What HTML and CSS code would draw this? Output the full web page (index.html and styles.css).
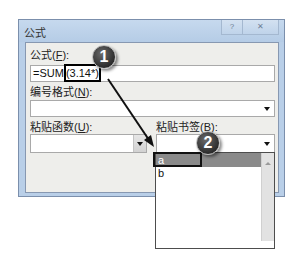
FILE: index.html
```html
<!DOCTYPE html>
<html lang="zh">
<head>
    <meta charset="UTF-8">
    <meta name="viewport" content="width=device-width, initial-scale=1.0">
    <title>公式</title>
    <link rel="stylesheet" href="styles.css">
</head>
<body>
    <div class="stage">
        <div class="dialog">
            <div class="titlebar">
                <span class="title">公式</span>
                <div class="title-buttons">
                    <span class="tbtn help">?</span>
                    <span class="tbtn close">&#x2715;</span>
                </div>
            </div>
            <div class="content">
                <div class="label first">公式(<u>F</u>):</div>
                <div class="field">=SUM<span class="mark">(3.14*)</span></div>

                <div class="label">编号格式(<u>N</u>):</div>
                <div class="field combo"><span class="arrow"></span></div>

                <div class="pair">
                    <div>
                        <div class="label">粘贴函数(<u>U</u>):</div>
                        <div class="field combo boxed"><span class="drop-btn"><span class="arrow"></span></span></div>
                    </div>
                    <div>
                        <div class="label">粘贴书签(<u>B</u>):</div>
                        <div class="field combo"><span class="arrow"></span></div>
                    </div>
                </div>
            </div>
        </div>

        <!-- opened bookmark list -->
        <div class="droplist">
            <div class="items">
                <div class="item selected">a</div>
                <div class="item">b</div>
            </div>
            <div class="scrollbar"><span class="up"></span></div>
        </div>

        <!-- callouts -->
        <div class="callbox"></div>
        <svg class="pointer" width="300" height="264" viewBox="0 0 300 264">
            <line x1="108" y1="79" x2="149" y2="140" stroke="#111" stroke-width="2"/>
            <polygon points="154,147 144,140 151,135" fill="#111"/>
        </svg>
        <div class="badge one">1</div>
        <div class="badge two">2</div>
    </div>
</body>
</html>
```

FILE: styles.css
```css
body {
    margin: 0;
    background-color: #fff;
    font-family: "Liberation Sans", "Noto Sans CJK SC", sans-serif;
    color: #222;
}

.stage {
    position: relative;
    width: 300px;
    height: 264px;
    overflow: hidden;
    padding: 19px 0 0 18px;
    box-sizing: border-box;
}

.dialog {
    width: 267px;
    border: 1px solid #7b8fac;
    background-color: #b9cfe8;
    padding: 0 5px 3px 6px;
    box-sizing: border-box;
}

.titlebar {
    height: 22px;
    display: flex;
    justify-content: space-between;
    align-items: flex-start;
    background: linear-gradient(#c6d9ee, #b5cce6);
    margin: 0 -5px 0 -6px;
    padding: 0 5px 0 5px;
}

.title {
    font-size: 11px;
    line-height: 12px;
    margin-top: 7px;
    color: #333;
}

.title-buttons {
    display: flex;
}

.tbtn {
    height: 14px;
    font-size: 8px;
    line-height: 14px;
    text-align: center;
    color: #6d7f96;
    background: linear-gradient(#d3e1f1, #bfd3ea);
    border: 1px solid #a4b8d0;
    border-top: none;
}

.help {
    width: 20px;
    border-right: none;
}

.close {
    width: 35px;
}

.content {
    height: 151px;
    border: 1px solid #8798b1;
    background-color: #eeeeeb;
    padding: 0 3px 0 4px;
    box-sizing: border-box;
}

.label {
    font-size: 11px;
    line-height: 12px;
    height: 12px;
    margin-top: 4px;
    color: #222;
}

.label.first {
    margin-top: 6px;
}

.field {
    position: relative;
    height: 17px;
    margin-top: 2px;
    background-color: #fff;
    border: 1px solid #a9a9a9;
    box-sizing: border-box;
    font-size: 11px;
    line-height: 15px;
    padding-left: 2px;
    color: #111;
}

.label.first + .field {
    margin-top: 4px;
}

.mark {
    border: 2px solid #000;
    padding: 1px 0 1px 0;
    background-color: #fff;
}

.combo .arrow {
    position: absolute;
    right: 4px;
    top: 6px;
    width: 0;
    height: 0;
    border-left: 3px solid transparent;
    border-right: 3px solid transparent;
    border-top: 4px solid #111;
}

.pair {
    display: grid;
    grid-template-columns: 117px 1fr;
    column-gap: 9px;
}

.pair .field {
    height: 19px;
    margin-top: 1px;
}

.pair .combo .arrow {
    top: 7px;
}

.drop-btn {
    position: absolute;
    right: 0;
    top: 0;
    bottom: 0;
    width: 12px;
    background: linear-gradient(#e6e6e6, #d2d2d2);
    border-left: 1px solid #c4c4c4;
}

.drop-btn .arrow {
    right: 3px;
}

/* opened list */
.droplist {
    position: absolute;
    left: 155px;
    top: 152px;
    width: 120px;
    height: 97px;
    border: 1px solid #4d4d4d;
    background-color: #fff;
    box-sizing: border-box;
    display: flex;
}

.items {
    flex: 1;
}

.item {
    height: 12px;
    font-size: 11px;
    line-height: 12px;
    padding-left: 2px;
    color: #111;
}

.item.selected {
    height: 14px;
    line-height: 14px;
    background-color: #8a8a8a;
    color: #fff;
}

.scrollbar {
    width: 12px;
    height: 88px;
    background-color: #e2e2e2;
    border-left: 1px solid #d0d0d0;
    position: relative;
}

.scrollbar .up {
    position: absolute;
    left: 3px;
    top: 9px;
    border-left: 3px solid transparent;
    border-right: 3px solid transparent;
    border-bottom: 3px solid #9a9a9a;
}

/* callouts */
.callbox {
    position: absolute;
    left: 153px;
    top: 152px;
    width: 49px;
    height: 15px;
    border: 2px solid #111;
    box-sizing: border-box;
}

.pointer {
    position: absolute;
    left: 0;
    top: 0;
}

.badge {
    position: absolute;
    width: 22px;
    height: 22px;
    border-radius: 50%;
    background: radial-gradient(circle at 40% 35%, #6a6a6a, #2c2c2c 70%);
    border: 1px solid #bdbdbd;
    box-shadow: 2px 2px 3px rgba(0, 0, 0, 0.45);
    color: #fff;
    font-weight: bold;
    font-size: 16px;
    line-height: 22px;
    text-align: center;
}

.badge.one {
    left: 92px;
    top: 45px;
}

.badge.two {
    left: 196px;
    top: 131px;
}
```
